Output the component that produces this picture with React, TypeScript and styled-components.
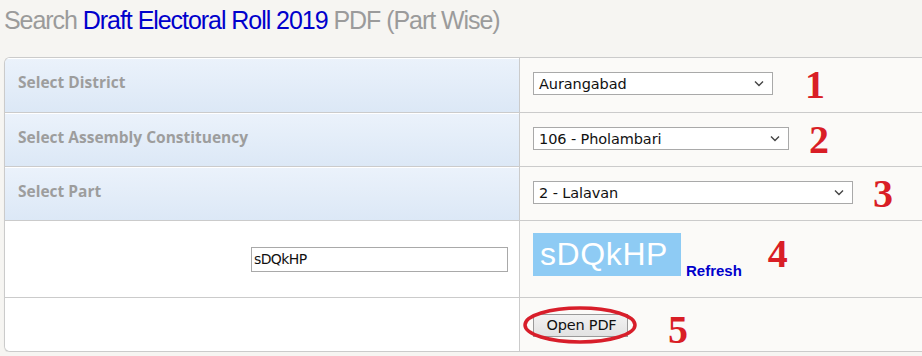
import styled, { createGlobalStyle } from "styled-components";

const Global = createGlobalStyle`
  html, body {
    margin: 0;
    background: #f6f5f2;
    overflow: hidden;
  }
  body {
    padding: 0 0 0 4px;
    font-family: "Liberation Sans", Arial, sans-serif;
  }
`;

const Page = styled.div`
  width: 960px;
`;

const Title = styled.h1`
  margin: 0;
  padding-top: 6px;
  height: 57px;
  box-sizing: border-box;
  font-family: "Liberation Sans", Arial, sans-serif;
  font-weight: normal;
  font-size: 25px;
  letter-spacing: -1.05px;
  color: #9b9b9b;
  white-space: nowrap;
`;

const Blue = styled.span`
  color: #0000cc;
`;

const Table = styled.div`
  border: 1px solid #cbcbcb;
  border-right: none;
  border-radius: 6px 0 0 6px;
  overflow: hidden;
  box-shadow: 0 1px 1px rgba(0, 0, 0, 0.08);
`;

const Row = styled.div<{ $h: number }>`
  display: grid;
  grid-template-columns: 514px 1fr;
  height: ${(p) => p.$h}px;
  & + & {
    border-top: 1px solid #cbcbcb;
  }
`;

const Label = styled.div`
  display: flex;
  align-items: center;
  padding: 0 0 6px 13px;
  background: linear-gradient(#ebf2fb, #dce8f6);
  box-shadow: inset 0 1px 0 #ffffff;
  font-family: "Open Sans", sans-serif;
  font-weight: 700;
  font-size: 15.5px;
  color: #9d9d9d;
`;

const Blank = styled.div<{ $right?: boolean }>`
  display: flex;
  align-items: center;
  justify-content: ${(p) => (p.$right ? "flex-end" : "flex-start")};
  padding-right: 11px;
  background: #ffffff;
`;

const Cell = styled.div<{ $top?: number }>`
  display: flex;
  align-items: flex-start;
  padding: ${(p) => p.$top ?? 14}px 0 0 13px;
  border-left: 1px solid #cbcbcb;
  background: #fbfaf8;
`;

const Select = styled.div<{ $w: number }>`
  box-sizing: border-box;
  width: ${(p) => p.$w}px;
  height: 23px;
  display: flex;
  align-items: center;
  justify-content: space-between;
  padding: 0 8px 0 5px;
  border: 1px solid #a9a9a9;
  background: #ffffff;
  font-family: "DejaVu Sans", sans-serif;
  font-size: 14.5px;
  letter-spacing: -0.1px;
  color: #111;
`;

const Mark = styled.span<{ $ml: number; $mt: number }>`
  margin: ${(p) => p.$mt}px 0 0 ${(p) => p.$ml}px;
  font-family: "Liberation Serif", "Times New Roman", serif;
  font-weight: 700;
  font-size: 40px;
  line-height: 1;
  color: #d91e26;
`;

const TextInput = styled.div`
  box-sizing: border-box;
  width: 257px;
  height: 25px;
  display: flex;
  align-items: center;
  padding-left: 2px;
  border: 1px solid #a9a9a9;
  background: #fff;
  font-family: "DejaVu Sans", sans-serif;
  font-size: 14px;
  letter-spacing: -0.6px;
  color: #111;
`;

const CaptchaGroup = styled.div`
  display: flex;
  align-items: flex-end;
`;

const Captcha = styled.div`
  width: 148px;
  height: 43px;
  display: flex;
  align-items: center;
  padding-left: 7px;
  box-sizing: border-box;
  background: #8ecbf4;
  color: #fff;
  font-family: "Liberation Sans", Arial, sans-serif;
  font-size: 32px;
  letter-spacing: 0.6px;
`;

const Refresh = styled.a`
  margin: 0 0 -3px 5px;
  font-family: "Liberation Sans", Arial, sans-serif;
  font-weight: 700;
  font-size: 15px;
  color: #0000cc;
  text-decoration: none;
`;

const Circled = styled.div`
  position: relative;
  display: flex;
  align-items: center;
  justify-content: center;
  width: 114px;
  height: 38px;
  margin-left: -10px;
`;

const Ring = styled.svg`
  position: absolute;
  inset: 0;
  pointer-events: none;
`;

const Button = styled.button`
  box-sizing: border-box;
  width: 95px;
  height: 23px;
  padding: 0 0 0 3px;
  border: 1px solid #9a9a9a;
  background: linear-gradient(#f2f2f2, #e2e2e2);
  font-family: "DejaVu Sans", sans-serif;
  font-size: 14.5px;
  letter-spacing: -0.2px;
  color: #111;
`;

const Chevron = () => (
  <svg width="10" height="7" viewBox="0 0 10 7">
    <path d="M1 1.5 L5 5.5 L9 1.5" fill="none" stroke="#444" strokeWidth="1.4" />
  </svg>
);

const selects = [
  { label: "Select District", value: "Aurangabad", w: 240, ml: 32, h: 54 },
  { label: "Select Assembly Constituency", value: "106 - Pholambari", w: 256, ml: 20, h: 53 },
  { label: "Select Part", value: "2 - Lalavan", w: 320, ml: 20, h: 53 },
];

export default function App() {
  return (
    <Page>
      <Global />
      <Title>
        Search <Blue>Draft Electoral Roll 2019</Blue> PDF (Part Wise)
      </Title>
      <Table>
        {selects.map((s, i) => (
          <Row key={s.label} $h={s.h}>
            <Label>{s.label}</Label>
            <Cell>
              <Select $w={s.w}>
                {s.value}
                <Chevron />
              </Select>
              <Mark $ml={s.ml} $mt={-7}>
                {i + 1}
              </Mark>
            </Cell>
          </Row>
        ))}
        <Row $h={76}>
          <Blank $right>
            <TextInput>sDQkHP</TextInput>
          </Blank>
          <Cell $top={12}>
            <CaptchaGroup>
              <Captcha>sDQkHP</Captcha>
              <Refresh href="#">Refresh</Refresh>
            </CaptchaGroup>
            <Mark $ml={26} $mt={1}>4</Mark>
          </Cell>
        </Row>
        <Row $h={53}>
          <Blank />
          <Cell $top={8}>
            <Circled>
              <Button>Open PDF</Button>
              <Ring viewBox="0 0 114 38">
                <ellipse cx="57" cy="19" rx="55" ry="17" fill="none" stroke="#d81e2a" strokeWidth="3.5" />
              </Ring>
            </Circled>
            <Mark $ml={31} $mt={4}>5</Mark>
          </Cell>
        </Row>
      </Table>
    </Page>
  );
}
